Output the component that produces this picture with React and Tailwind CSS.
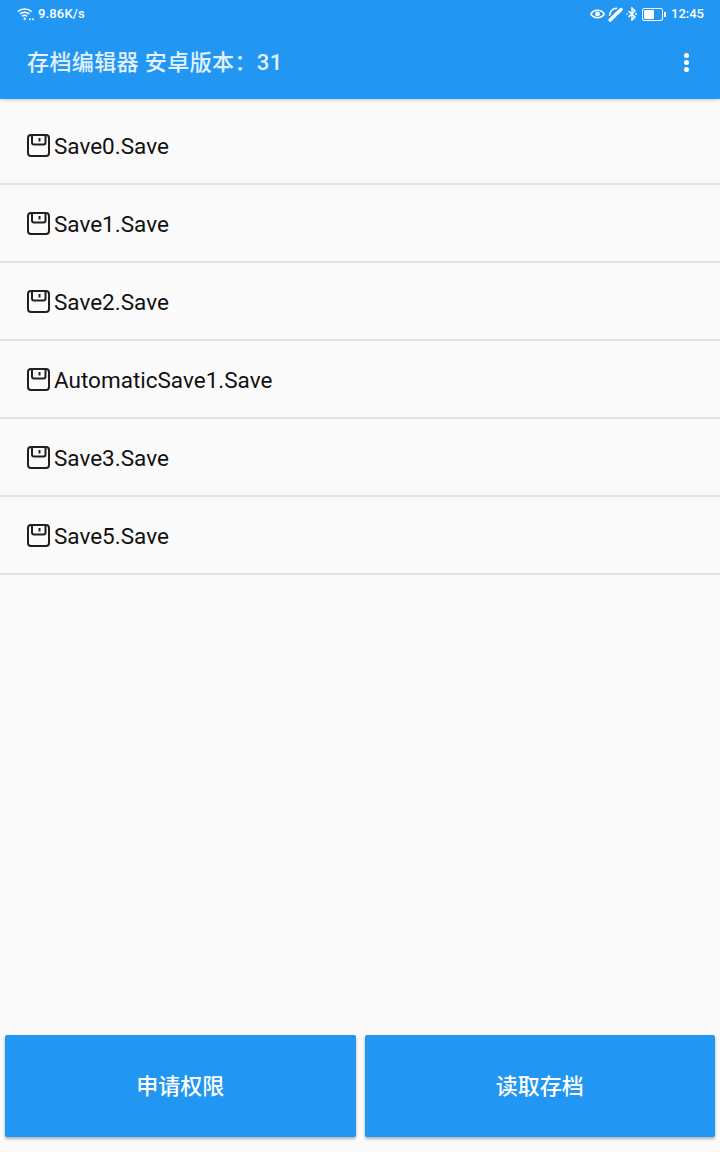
import React from "react";

const saves = [
  "Save0.Save",
  "Save1.Save",
  "Save2.Save",
  "AutomaticSave1.Save",
  "Save3.Save",
  "Save5.Save",
];

const fontStack = "font-['Roboto','Noto_Sans_CJK_SC',sans-serif]";

function SaveIcon() {
  return (
    <svg width="23" height="23" viewBox="0 0 23 23" fill="none" stroke="#231f20" strokeWidth="2" className="shrink-0">
      <path d="M4 1h15a3 3 0 0 1 3 3v15a3 3 0 0 1-3 3H4a3 3 0 0 1-3-3V4a3 3 0 0 1 3-3z" />
      <path d="M5 1v7.500a2 2 0 0 0 2 2h9.500a2 2 0 0 0 2-2V1" />
      <path d="M12.500 4v3.500" />
    </svg>
  );
}

function StatusBar() {
  return (
    <div className="h-[28px] flex items-center justify-between pl-[17px] pr-[16px] text-white text-[13px] font-medium">
      <div className="flex items-center gap-[4px]">
        <svg width="17" height="14" viewBox="0 0 17 14" fill="none" stroke="white" strokeWidth="1.500">
          <path d="M.8 4.600c3.800-3.600 10-3.600 13.800 0" />
          <path d="M3 7c2.600-2.400 6.800-2.400 9.400 0" />
          <path d="M5.200 9.400c1.400-1.200 3.600-1.200 5 0" />
          <circle cx="7.700" cy="11.800" r="1.200" fill="white" stroke="none" />
          <circle cx="13" cy="12.300" r="1" fill="white" stroke="none" />
          <circle cx="16" cy="12.300" r="1" fill="white" stroke="none" />
        </svg>
        <span className="tracking-[0.15px]">9.86K/s</span>
      </div>
      <div className="flex items-center">
        <svg width="15" height="12" viewBox="0 0 15 12" fill="none" stroke="white" strokeWidth="1.500" className="mr-[3px]">
          <path d="M.8 6C3.800 1 11.200 1 14.200 6 11.200 11 3.800 11 .8 6z" />
          <circle cx="7.500" cy="6" r="2.400" fill="white" stroke="none" />
        </svg>
        <svg width="15" height="15" viewBox="0 0 15 15" fill="none" stroke="white" className="mr-[3px]">
          <path d="M2.200 13 13 2.500" strokeWidth="3.400" strokeLinecap="round" />
          <path d="M1.500 9C1.500 4.500 4.500 1.200 9 1.200" strokeWidth="1.400" />
        </svg>
        <svg width="12" height="14" viewBox="0 0 12 14" fill="none" stroke="white" strokeWidth="1.500" className="mr-[4px]">
          <path d="M2.500 4 9 10 6 13V1l3 3-6.500 6" />
          <path d="M10 6v2M.5 7h1.200" />
        </svg>
        <div className="w-[21px] h-[13px] rounded-[2px] border-[1.5px] border-white p-[1px] mr-[1px]">
          <div className="w-[10px] h-full bg-white rounded-[1px]" />
        </div>
        <div className="w-[2px] h-[5px] bg-white mr-[5px]" />
        <span>12:45</span>
      </div>
    </div>
  );
}

function SaveRow({ name, first }) {
  return (
    <div className={`flex items-center pl-[27px] border-b-2 border-[#e2e2e2] ${first ? "h-[86px] pt-[8px]" : "h-[78px]"}`}>
      <SaveIcon />
      <span className="text-[22.5px] leading-none text-[#111] ml-[4px] mt-[2px]">{name}</span>
    </div>
  );
}

export default function App() {
  return (
    <div className={`w-[720px] h-[1152px] bg-[#fafafa] flex flex-col ${fontStack}`}>
      <div className="h-[99px] bg-[#2196f3] shadow-[0_1px_3px_rgba(0,0,0,0.2)] shrink-0 relative">
        <StatusBar />
        <div className="h-[71px] flex items-center justify-between pl-[27px] pr-[31px] pb-[2px]">
          <span className="text-[22px] font-medium text-[#e3f1fd] tracking-[0.4px]">存档编辑器 安卓版本：31</span>
          <div className="flex flex-col gap-[2px]">
            <div className="w-[5px] h-[5px] rounded-full bg-white" />
            <div className="w-[5px] h-[5px] rounded-full bg-white" />
            <div className="w-[5px] h-[5px] rounded-full bg-white" />
          </div>
        </div>
      </div>

      <div className="flex-1 flex flex-col">
        {saves.map((name, i) => (
          <SaveRow key={name} name={name} first={i === 0} />
        ))}
      </div>

      <div className="flex gap-[9px] px-[5px] pb-[15px]">
        <button className="flex-1 h-[102px] bg-[#2196f3] rounded-[2px] shadow-[0_2px_3px_rgba(0,0,0,0.3)] text-white text-[22px] font-medium">
          申请权限
        </button>
        <button className="flex-1 h-[102px] bg-[#2196f3] rounded-[2px] shadow-[0_2px_3px_rgba(0,0,0,0.3)] text-white text-[22px] font-medium">
          读取存档
        </button>
      </div>
    </div>
  );
}
